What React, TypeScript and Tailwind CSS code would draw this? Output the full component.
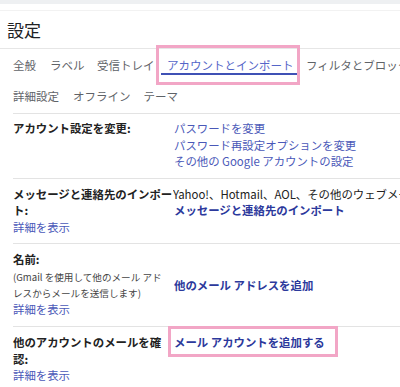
import React from "react";

const font = { fontFamily: '"Noto Sans CJK JP", "Noto Sans", sans-serif' };

function Row({ left, right, className = "" }: { left: React.ReactNode; right: React.ReactNode; className?: string }) {
  return (
    <div className={`ml-[13px] border-t border-[#e3e3e3] flex ${className}`}>
      <div className="w-[160px] shrink-0">{left}</div>
      <div className="flex-1 min-w-0">{right}</div>
    </div>
  );
}

export default function App() {
  const link = "text-[#4a58b8]";
  const boldLink = "text-[#2c399c] font-bold";
  return (
    <div className="w-[400px] h-[387px] overflow-hidden bg-white text-[#222] relative" style={font}>
      <div className="h-[4px] bg-[#eef0f2]" />
      <div className="h-[6px]" />
      <div className="h-[1px] bg-[#f2f2f2]" />
      <div className="h-[37px] pl-[7px] flex items-center text-[17px] leading-none text-[#202124]">設定</div>
      <div className="h-[1px] bg-[#e6e6e6]" />

      {/* tabs row 1 */}
      <div className="relative h-[33px] flex items-center gap-[12.5px] pl-[13px] text-[11.5px] text-[#5f6368] whitespace-nowrap leading-none pt-[1px]">
        <span className="mr-[1.5px]">全般</span>
        <span>ラベル</span>
        <span>受信トレイ</span>
        <span className="relative text-[#5566c8]">
          アカウントとインポート
          <span className="absolute left-[-6px] right-[-4px] top-[13px] h-[2px] bg-[#3f51b5]" />
        </span>
        <span>フィルタとブロック中のアドレス</span>
        <div className="absolute left-[156px] top-[-4px] w-[144px] h-[40px] border-[3px] border-[#f2a6c6] pointer-events-none" />
      </div>
      {/* tabs row 2 */}
      <div className="h-[31px] flex items-center gap-[13px] pl-[13px] text-[11.5px] text-[#5f6368] whitespace-nowrap leading-none pb-[2px]">
        <span className="mr-[1px]">詳細設定</span>
        <span>オフライン</span>
        <span>テーマ</span>
      </div>

      <div className="text-[11.4px] leading-[16.5px] whitespace-nowrap">
        <Row
          className="pt-[6px] pb-[8px]"
          left={<div className="font-bold">アカウント設定を変更:</div>}
          right={
            <div className={`pl-[1px] ${link}`}>
              <div>パスワードを変更</div>
              <div>パスワード再設定オプションを変更</div>
              <div>その他の Google アカウントの設定</div>
            </div>
          }
        />
        <Row
          className="pt-[7px] pb-[8px]"
          left={
            <div>
              <div className="font-bold">メッセージと連絡先のインポー</div>
              <div className="font-bold">ト:</div>
              <div className={link}>詳細を表示</div>
            </div>
          }
          right={
            <div>
              <div className="overflow-hidden">Yahoo!、Hotmail、AOL、その他のウェブメール アカウントからインポートします。</div>
              <div className={`pl-[1px] ${boldLink}`}>メッセージと連絡先のインポート</div>
            </div>
          }
        />
        <Row
          className="pt-[7px] pb-[9px]"
          left={
            <div>
              <div className="font-bold">名前:</div>
              <div className="text-[9.6px] leading-[16px] text-[#444] pt-[1px]">
                <div>(Gmail を使用して他のメール アド</div>
                <div>レスからメールを送信します)</div>
              </div>
              <div className={link}>詳細を表示</div>
            </div>
          }
          right={
            <div className="h-full flex items-center pl-[1px] pt-[2px]">
              <span className={boldLink}>他のメール アドレスを追加</span>
            </div>
          }
        />
        <Row
          className="pt-[7px] pb-[8px]"
          left={
            <div>
              <div className="font-bold">他のアカウントのメールを確</div>
              <div className="font-bold">認:</div>
              <div className={link}>詳細を表示</div>
            </div>
          }
          right={
            <div className="relative pl-[1px]">
              <span className={boldLink}>メール アカウントを追加する</span>
              <div className="absolute left-[-5px] top-[-8px] w-[170px] h-[31px] border-[3px] border-[#f2a6c6] pointer-events-none" />
            </div>
          }
        />
      </div>
    </div>
  );
}
